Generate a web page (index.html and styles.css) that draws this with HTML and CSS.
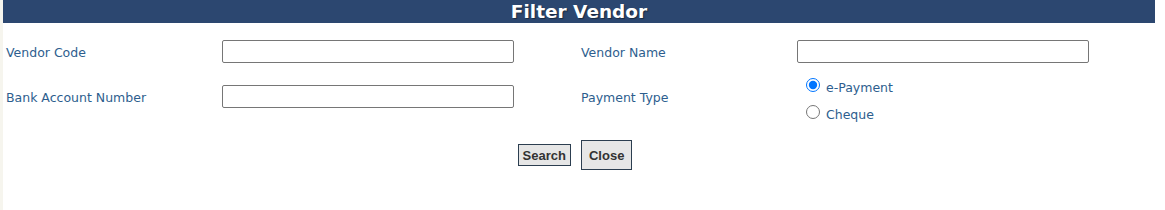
FILE: index.html
```html
<!DOCTYPE html>
<html>
<head>
<meta charset="utf-8">
<link rel="stylesheet" href="styles.css">
</head>
<body>
<div class="page">
  <div class="panel">
    <div class="title">Filter Vendor</div>
    <div class="form">
      <div class="label">Vendor Code</div>
      <div class="field"><input type="text" class="txt"></div>
      <div class="label">Vendor Name</div>
      <div class="field"><input type="text" class="txt"></div>

      <div class="label">Bank Account Number</div>
      <div class="field"><input type="text" class="txt"></div>
      <div class="label">Payment Type</div>
      <div class="radios">
        <label class="opt"><input type="radio" name="pt" checked> e-Payment</label>
        <label class="opt"><input type="radio" name="pt"> Cheque</label>
      </div>
    </div>
    <div class="actions">
      <button class="btn btn-search">Search</button>
      <button class="btn btn-close">Close</button>
    </div>
  </div>
</div>
</body>
</html>
```
FILE: styles.css
```css
html, body {
  margin: 0;
  padding: 0;
  background: #ffffff;
}
.page {
  border-left: 3px solid #f6f5ee;
  min-height: 210px;
  box-sizing: border-box;
}
.panel {
  width: 1152px;
}
.title {
  background: #2c4770;
  color: #ffffff;
  font-family: "DejaVu Sans", Verdana, sans-serif;
  font-weight: bold;
  font-size: 18.5px;
  height: 23px;
  line-height: 24px;
  text-align: center;
  text-shadow: 1px 1px 1px #1a2a40;
}
.form {
  display: grid;
  grid-template-columns: 216px 359px 216px 361px;
  grid-template-rows: 45px 46px;
  align-items: center;
  margin-top: 17px;
  font-family: "DejaVu Sans", Verdana, sans-serif;
  font-size: 12.5px;
  color: #2d5e8e;
}
.form > .label, .form > .field {
  padding-left: 3px;
  align-self: start;
}
.form > .label {
  line-height: 23px;
  padding-top: 1px;
}
.txt {
  box-sizing: border-box;
  width: 292px;
  height: 23px;
  margin: 0;
  border: 1px solid #767676;
  border-radius: 2px;
  padding: 1px 3px;
}
.radios {
  display: flex;
  flex-direction: column;
  gap: 4px;
  padding-left: 11px;
  margin-top: -14px;
}
.opt {
  display: flex;
  align-items: center;
  height: 23px;
}
.opt input {
  margin: 0 6px 0 1px;
  width: 14px;
  height: 14px;
  position: relative;
  top: -3px;
}
.actions {
  display: flex;
  justify-content: center;
  align-items: center;
  gap: 10px;
  margin-top: 9px;
  padding-right: 8px;
}
.btn {
  font-family: "Liberation Sans", Arial, sans-serif;
  font-weight: bold;
  font-size: 13px;
  color: #333333;
  background: #e6e6e6;
  border: 1px solid #2c3e50;
  border-radius: 0;
  margin: 0;
  cursor: pointer;
}
.btn-search {
  height: 22px;
  padding: 0 4px;
}
.btn-close {
  height: 30px;
  padding: 0 7px;
}
```
